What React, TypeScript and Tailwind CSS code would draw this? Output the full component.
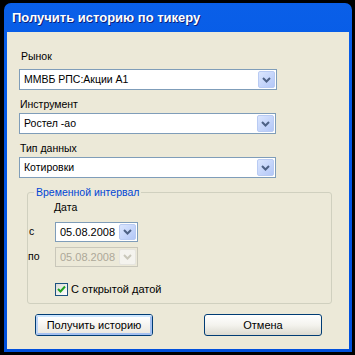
import React from 'react'

const font = { fontFamily: '"Liberation Sans", Arial, sans-serif' }

function Chevron({ color = '#4d6185' }: { color?: string }) {
  return (
    <svg width="9" height="6" viewBox="0 0 9 6">
      <path d="M1 1 L4.5 4.5 L8 1" fill="none" stroke={color} strokeWidth="2" />
    </svg>
  )
}

function DropButton({ disabled = false }: { disabled?: boolean }) {
  return (
    <div
      className={`w-[17px] h-full flex items-center justify-center rounded-[2px] border ${
        disabled
          ? 'border-[#e6e5df] bg-[#f4f3ee]'
          : 'border-[#b9cbf3] bg-gradient-to-br from-[#dbe6fe] to-[#b3c7f7]'
      }`}
    >
      <Chevron color={disabled ? '#c9c7ba' : '#4d6185'} />
    </div>
  )
}

function Select({ value, w }: { value: string; w: string }) {
  return (
    <div className={`${w} h-[21px] border border-[#7f9db9] bg-white flex items-center p-[1px]`}>
      <span className="flex-1 pl-[3px] text-[10.5px] text-black leading-none">{value}</span>
      <DropButton />
    </div>
  )
}

function DateInput({ disabled = false }: { disabled?: boolean }) {
  return (
    <div
      className={`w-[83px] h-[20px] border flex items-center p-[1px] ${
        disabled ? 'border-[#c9c7ba] bg-[#ece9d8]' : 'border-[#7f9db9] bg-white'
      }`}
    >
      <span className={`flex-1 pl-[3px] text-[11px] leading-none ${disabled ? 'text-[#aca899]' : 'text-black'}`}>
        05.08.2008
      </span>
      <DropButton disabled={disabled} />
    </div>
  )
}

function Label({ text, cls }: { text: string; cls?: string }) {
  return <div className={`h-[13px] leading-[13px] text-[10.5px] text-black ${cls ?? ''}`}>{text}</div>
}

export default function App() {
  return (
    <div className="w-[355px] h-[355px] bg-black pt-[3px] pl-[4px]" style={font}>
      <div className="w-[348px] h-[349px] rounded-t-[7px] bg-gradient-to-b from-[#0a5fe8] via-[#0055e5] to-[#0050dc] flex flex-col">
        <div className="h-[29px] flex items-center pl-[8px] pt-[1px]">
          <span className="text-white font-bold text-[13px] [text-shadow:1px_1px_0_#0a1f7a]">
            Получить историю по тикеру
          </span>
        </div>
        <div className="flex-1 mx-[3px] mb-[3px] bg-[#ece9d8] flex flex-col">
          <div className="pl-[14px] pt-[18px]">
            <Label text="Рынок" />
          </div>
          <div className="pl-[12px] mt-[6px]">
            <Select value="ММВБ РПС:Акции А1" w="w-[258px]" />
          </div>
          <div className="pl-[13px] mt-[8px]">
            <Label text="Инструмент" />
          </div>
          <div className="pl-[12px] mt-[2px]">
            <Select value="Ростел -ао" w="w-[257px]" />
          </div>
          <div className="pl-[13px] mt-[8px]">
            <Label text="Тип данных" />
          </div>
          <div className="pl-[12px] mt-[2px]">
            <Select value="Котировки" w="w-[257px]" />
          </div>

          <fieldset className="ml-[20px] mt-[8px] w-[305px] h-[118px] border border-[#d0d0bf] rounded-[3px] px-0 pb-0 pt-0 m-0">
            <legend className="ml-[6px] px-[2px] h-[13px] leading-[13px] text-[10.5px] text-[#0046d5]">
              Временной интервал
            </legend>
            <div className="pl-[26px] mt-[2px]">
              <Label text="Дата" />
            </div>
            <div className="flex items-center mt-[8px]">
              <div className="w-[27px] text-[10.5px] pl-[1px]">с</div>
              <DateInput />
            </div>
            <div className="flex items-center mt-[5px]">
              <div className="w-[27px] text-[10.5px] pl-[0px]">по</div>
              <DateInput disabled />
            </div>
            <div className="flex items-center mt-[16px] pl-[27px]">
              <div className="w-[13px] h-[13px] border border-[#1c5180] bg-gradient-to-br from-[#dcdcd7] to-white flex items-center justify-center">
                <svg width="9" height="9" viewBox="0 0 9 9">
                  <path d="M1 4 L3.5 6.5 L8 1.5" fill="none" stroke="#21a121" strokeWidth="2" />
                </svg>
              </div>
              <span className="ml-[3px] text-[11px] leading-none">С открытой датой</span>
            </div>
          </fieldset>

          <div className="flex mt-[10px] pl-[28px]">
            <button className="w-[118px] h-[22px] rounded-[3px] border border-[#003c74] p-0">
              <div className="w-full h-full rounded-[2px] border-2 border-[#a4c0f0] border-t-[#cee7ff] border-l-[#bcd4f6] bg-gradient-to-b from-white to-[#ece9e0] flex items-center justify-center text-[11px]">
                Получить историю
              </div>
            </button>
            <button className="ml-[51px] w-[118px] h-[22px] rounded-[3px] border border-[#003c74] bg-gradient-to-b from-white via-[#f4f3ee] to-[#dcdad0] flex items-center justify-center text-[11px]">
              Отмена
            </button>
          </div>
        </div>
      </div>
    </div>
  )
}
